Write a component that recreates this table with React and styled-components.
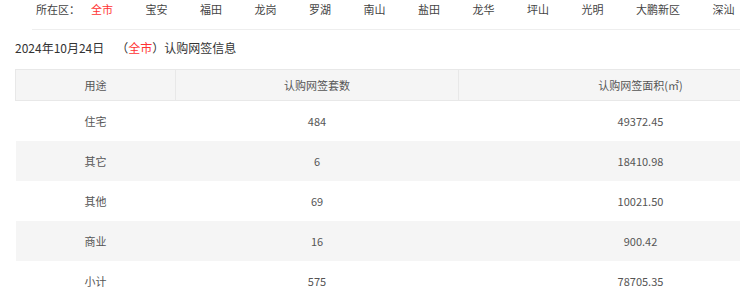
import styled, { createGlobalStyle } from "styled-components";

const GlobalStyle = createGlobalStyle`
    html, body {
        margin: 0;
        padding: 0;
        overflow: hidden;
        background: #fff;
        font-family: "Noto Sans CJK SC", "Microsoft YaHei", sans-serif;
        color: #333;
    }
`;

const districts = ["宝安", "福田", "龙岗", "罗湖", "南山", "盐田", "龙华", "坪山", "光明", "大鹏新区", "深汕"];

const rows = [
    { use: "住宅", count: "484", area: "49372.45" },
    { use: "其它", count: "6", area: "18410.98" },
    { use: "其他", count: "69", area: "10021.50" },
    { use: "商业", count: "16", area: "900.42" },
    { use: "小计", count: "575", area: "78705.35" },
];

const App = () => {
    return (
        <Page>
            <GlobalStyle />
            <Nav>
                <NavLabel>所在区：</NavLabel>
                <NavList>
                    <NavItem $active>全市</NavItem>
                    {districts.map((d) => (
                        <NavItem key={d}>{d}</NavItem>
                    ))}
                </NavList>
            </Nav>
            <Divider />
            <Title>
                <span>2024年10月24日</span>
                <TitleInfo>
                    （<Red>全市</Red>）认购网签信息
                </TitleInfo>
            </Title>
            <Table>
                <colgroup>
                    <col style={{ width: 160 }} />
                    <col style={{ width: 283 }} />
                    <col style={{ width: 364 }} />
                </colgroup>
                <thead>
                    <tr>
                        <Th>用途</Th>
                        <Th>认购网签套数</Th>
                        <Th>认购网签面积(㎡)</Th>
                    </tr>
                </thead>
                <tbody>
                    {rows.map((r, i) => (
                        <Row key={r.use} $striped={i % 2 === 1}>
                            <Td>{r.use}</Td>
                            <Td>{r.count}</Td>
                            <Td>{r.area}</Td>
                        </Row>
                    ))}
                </tbody>
            </Table>
        </Page>
    );
};

const Page = styled.div`
    width: 740px;
    height: 295px;
    overflow: hidden;
`;

const Nav = styled.div`
    display: flex;
    align-items: center;
    height: 17px;
    padding-left: 36px;
    font-size: 11px;
    white-space: nowrap;
`;

const NavLabel = styled.span`
    margin-right: 11px;
    color: #444;
`;

const NavList = styled.div`
    display: flex;
    gap: 32.5px;
`;

const NavItem = styled.span`
    color: ${(p) => (p.$active ? "#ff3333" : "#444")};
    cursor: pointer;
`;

const Divider = styled.div`
    margin: 12px 0 0 32px;
    border-top: 1px solid #eeeeee;
`;

const Title = styled.div`
    display: flex;
    align-items: center;
    height: 20px;
    margin-top: 7px;
    padding-left: 15px;
    font-size: 12px;
    color: #333;
`;

const TitleInfo = styled.span`
    margin-left: 12px;
`;

const Red = styled.span`
    color: #ff3333;
`;

const Table = styled.table`
    margin: 12px 0 0 15px;
    width: 807px;
    border-collapse: collapse;
    table-layout: fixed;
    font-size: 11px;
    color: #555;
`;

const Th = styled.th`
    height: 30px;
    padding: 0;
    font-weight: normal;
    background: #f5f5f5;
    border: 1px solid #e8e8e8;
    text-align: center;
`;

const Row = styled.tr`
    background: ${(p) => (p.$striped ? "#f5f5f5" : "#fff")};
`;

const Td = styled.td`
    height: 40px;
    padding: 0;
    text-align: center;
`;

export default App;
